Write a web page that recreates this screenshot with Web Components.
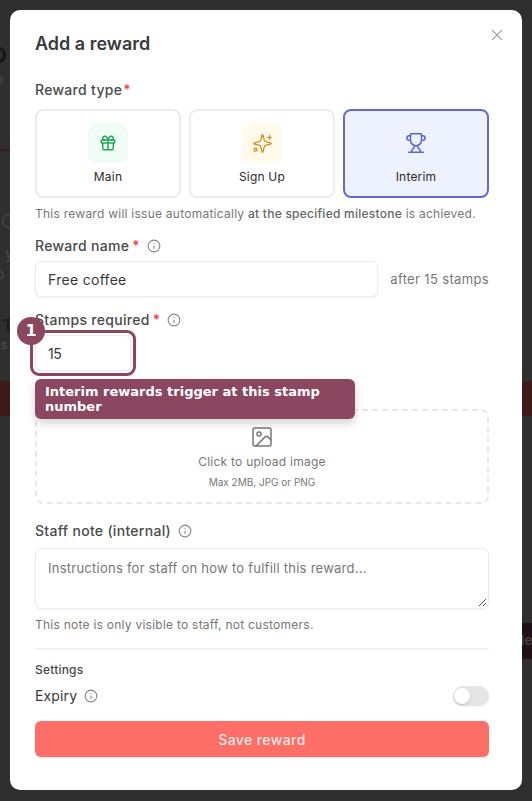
<!DOCTYPE html>
<html><head><meta charset="utf-8"><style>
html,body{margin:0;padding:0;height:801px;overflow:hidden;background:#2f2f2f}
body{font-family:Inter,"Liberation Sans",sans-serif}
</style></head><body>
<app-backdrop>
<reward-modal>
</reward-modal>
</app-backdrop>
<script>
const def=(n,css,html)=>customElements.define(n,class extends HTMLElement{constructor(){super();this.attachShadow({mode:'open'}).innerHTML=`<style>${css}</style>${html}`;}});
const INFO=`<svg width="14" height="14" viewBox="0 0 24 24" fill="none" stroke="#888" stroke-width="1.9" stroke-linecap="round"><circle cx="12" cy="12" r="10"/><path d="M12 16v-4M12 8h.01"/></svg>`;
def('info-icon',`:host{display:inline-flex;margin-left:7px}`,INFO);
def('app-backdrop',`:host{display:block;position:relative;width:532px;height:801px;box-sizing:border-box;padding:10px;background:#2f2f2f;overflow:hidden}
.band{position:absolute;background:#3e1a18}
.arc{position:absolute;border-radius:50%;box-sizing:border-box;border-style:solid}
.g{position:absolute;font-family:Inter,sans-serif;white-space:nowrap;line-height:1}`,`
<div class="band" style="left:0;top:381px;width:10px;height:35px"></div>
<div class="band" style="left:522px;top:381px;width:10px;height:35px"></div>
<div class="band" style="left:522px;top:623px;width:10px;height:36px;background:#1f1117"></div>
<div class="band" style="left:0;top:149px;width:10px;height:2px;background:#3a1a22"></div>
<div class="arc" style="left:-8px;top:47px;width:14px;height:16px;border-width:3px;border-color:#161616"></div>
<div class="arc" style="left:-5px;top:76px;width:8px;height:8px;border-width:1px;border-color:#555"></div>
<div class="arc" style="left:2px;top:214px;width:14px;height:14px;border-width:1px;border-color:#555"></div>
<div class="arc" style="left:-4px;top:271px;width:8px;height:8px;border-width:1px;border-color:#555"></div>
<span class="g" style="left:2px;top:317px;font-size:18px;font-weight:700;color:#1d1d1d">T</span>
<span class="g" style="left:1px;top:339px;font-size:12px;color:#555">s</span>
<span class="g" style="left:5px;top:245px;font-size:16px;color:#4a4a4a">y</span>
<span class="g" style="left:521px;top:634px;font-size:13px;font-weight:600;color:#444">le</span>
<slot></slot>`);
def('type-card',`:host{display:flex;flex-direction:column;align-items:center;box-sizing:border-box;height:89px;flex:1 1 0;border:2px solid #ececec;border-radius:8px;background:#fff;padding-top:12px;font-size:12px;color:#2b2b2b}
:host([active]){border-color:#6069d6;background:#eef1fe}
.i{width:40px;height:40px;border-radius:10px;display:flex;align-items:center;justify-content:center;background:var(--tint,transparent)}
.l{margin-top:6px;line-height:16px;letter-spacing:.2px}`,`<div class="i"><slot name="icon"></slot></div><div class="l"><slot></slot></div>`);
def('field-label',`:host{display:flex;align-items:center;font-size:14px;font-weight:500;color:#4a4a4a;line-height:18px;letter-spacing:.3px}`,`<slot></slot><slot name="req"></slot><slot name="info"></slot>`);
def('text-box',`:host{display:flex;align-items:center;box-sizing:border-box;height:36px;border:1px solid #ececec;border-radius:6px;background:#fff;padding:0 12px;font-size:14px;color:#3a3a3a;box-shadow:0 1px 2px rgba(0,0,0,.05);letter-spacing:.3px}`,`<slot></slot>`);
def('toggle-switch',`:host{display:block;position:relative;width:36px;height:20px;border-radius:10px;background:#e5e5e5;box-shadow:0 1px 3px rgba(0,0,0,.05)}
.k{position:absolute;left:1px;top:2px;width:16px;height:16px;border-radius:50%;background:#fff;box-shadow:0 1px 2px rgba(0,0,0,.2)}`,`<div class="k"></div>`);
def('coach-mark',`:host{display:block;position:absolute;inset:0;pointer-events:none}
.ring{position:absolute;left:20px;top:320px;width:106px;height:46px;box-sizing:border-box;border:3px solid #8b4660;border-radius:9px}
.n{position:absolute;left:7px;top:307px;width:28px;height:28px;border-radius:50%;background:#8b4660;color:#fff;font:700 16px/28px "DejaVu Sans",sans-serif;text-align:center}
.t{position:absolute;left:25px;top:369px;width:320px;height:40px;box-sizing:border-box;background:#8b4660;border-radius:6px;color:#fff;font:700 13px/15px "DejaVu Sans",sans-serif;padding:5px 10px;box-shadow:0 4px 10px rgba(0,0,0,.18)}`,`<div class="ring"></div><div class="n">1</div><div class="t">Interim rewards trigger at this stamp number</div>`);
def('reward-modal',`:host{display:block;position:relative;width:512px;height:780px;box-sizing:border-box;background:#fff;border-radius:10px;padding:22px 33px 0 25px;color:#333}
*{box-sizing:border-box}
h2{margin:0;font-size:18px;font-weight:600;line-height:24px;color:#3a3a3a}
.x{position:absolute;right:18px;top:17.5px;display:flex}
.cards{display:flex;gap:8px;margin-top:10px}
.hint{font-size:12px;line-height:16px;color:#777;letter-spacing:.25px;white-space:nowrap}
.hint b{font-weight:500;color:#666}
.row{display:flex;align-items:center;gap:12px}
.after{font-size:13px;color:#777;white-space:nowrap;letter-spacing:.35px}
.up{display:flex;flex-direction:column;align-items:center;height:95px;border:2px dashed #e8e8e8;border-radius:8px;padding-top:14px;color:#777}
.up .a{font-size:12px;line-height:16px;margin-top:5px;letter-spacing:.25px}
.up .b{font-size:10px;line-height:14px;margin-top:5px}
.ta{height:61px;border:1px solid #ececec;border-radius:6px;padding:10px 12px;font-size:13px;line-height:18px;letter-spacing:.25px;color:#777;position:relative;box-shadow:0 1px 2px rgba(0,0,0,.05)}
.ta svg{position:absolute;right:1px;bottom:1px}
hr{border:0;height:2px;background:#f1f1f1;margin:15px 0 0}
.set{font-size:12px;font-weight:500;color:#4a4a4a;line-height:16px;margin-top:12px;letter-spacing:.2px}
.exp{display:flex;align-items:center;justify-content:space-between;margin-top:8px}
.exp span{display:flex;align-items:center;font-size:14px;color:#3a3a3a;line-height:18px;letter-spacing:.15px}
.save{display:flex;align-items:center;justify-content:center;height:36px;border-radius:6px;background:#fd6f66;color:rgba(255,255,255,.88);margin-top:15px;font-size:14px;font-weight:500;letter-spacing:.4px;box-shadow:0 1px 2px rgba(0,0,0,.1)}
`,`
<div class="x"><svg width="14" height="14" viewBox="0 0 14 14" fill="none" stroke="#999" stroke-width="1.1"><path d="M2.2 2.2l9.6 9.6M11.8 2.2l-9.6 9.6"/></svg></div>
<h2>Add a reward</h2>
<field-label style="margin-top:25px">Reward type<span slot="req" style="color:#ef4444;margin-left:1px">*</span></field-label>
<div class="cards">
<type-card style="--tint:#effdf4"><svg slot="icon" width="18" height="18" viewBox="0 0 24 24" fill="none" stroke="#22a55a" stroke-width="1.9" stroke-linecap="round" stroke-linejoin="round"><rect x="3" y="8" width="18" height="4" rx="1"/><path d="M12 8v13M19 12v7a2 2 0 0 1-2 2H7a2 2 0 0 1-2-2v-7M7.5 8a2.5 2.5 0 0 1 0-5A4.8 8 0 0 1 12 8a4.8 8 0 0 1 4.5-5 2.5 2.5 0 0 1 0 5"/></svg>Main</type-card>
<type-card style="--tint:#fffae9"><svg slot="icon" width="21" height="21" viewBox="0 0 24 24" fill="none" stroke="#db8a1e" stroke-width="1.5" stroke-linecap="round" stroke-linejoin="round"><path d="M9.94 15.5A2 2 0 0 0 8.5 14.06l-6.14-1.58a.5.5 0 0 1 0-.96L8.5 9.94A2 2 0 0 0 9.94 8.5l1.58-6.14a.5.5 0 0 1 .96 0L14.06 8.5a2 2 0 0 0 1.44 1.44l6.14 1.58a.5.5 0 0 1 0 .96L15.5 14.06a2 2 0 0 0-1.44 1.44l-1.58 6.14a.5.5 0 0 1-.96 0z"/><path d="M20 3v4M22 5h-4"/><circle cx="4" cy="19" r="1.6"/></svg>Sign Up</type-card>
<type-card active><svg slot="icon" width="22" height="22" viewBox="0 0 24 24" fill="none" stroke="#5b63d3" stroke-width="1.6" stroke-linecap="round" stroke-linejoin="round"><path d="M6 9H4.5a2.5 2.5 0 0 1 0-5H6M18 9h1.5a2.5 2.5 0 0 0 0-5H18M4 22h16M10 14.66V17c0 .55-.47.98-.97 1.21C7.85 18.75 7 20.24 7 22M14 14.66V17c0 .55.47.98.97 1.21C16.15 18.75 17 20.24 17 22"/><path d="M18 2H6v7a6 6 0 0 0 12 0V2z"/></svg>Interim</type-card>
</div>
<div class="hint" style="margin-top:8px">This reward will issue automatically <b>at the specified milestone</b> is achieved.</div>
<field-label style="margin-top:15px">Reward name<span slot="req" style="color:#ef4444;margin-left:3px">*</span><info-icon slot="info"></info-icon></field-label>
<div class="row" style="margin-top:6px"><text-box style="flex:1">Free coffee</text-box><span class="after">after 15 stamps</span></div>
<field-label style="margin-top:14px">Stamps required<span slot="req" style="color:#ef4444;margin-left:3px">*</span><info-icon slot="info"></info-icon></field-label>
<text-box style="margin-top:6px;width:96px;letter-spacing:-.4px;">15</text-box>
<div style="height:38px"></div>
<div class="up"><svg width="24" height="24" viewBox="0 0 24 24" fill="none" stroke="#777" stroke-width="1.5" stroke-linecap="round" stroke-linejoin="round"><rect x="3" y="3" width="18" height="18" rx="2"/><circle cx="9" cy="9" r="2"/><path d="M21 15l-3.1-3.1a2 2 0 0 0-2.8 0L6 21"/></svg><div class="a">Click to upload image</div><div class="b">Max 2MB, JPG or PNG</div></div>
<field-label style="margin-top:18px">Staff note (internal)<info-icon slot="info"></info-icon></field-label>
<div class="ta" style="margin-top:8px">Instructions for staff on how to fulfill this reward...<svg width="9" height="9" viewBox="0 0 9 9" stroke="#555" stroke-width="1"><path d="M1 8l7-7M5 8l3-3"/></svg></div>
<div class="hint" style="margin-top:8px">This note is only visible to staff, not customers.</div>
<hr>
<div class="set">Settings</div>
<div class="exp"><span>Expiry<info-icon></info-icon></span><toggle-switch></toggle-switch></div>
<div class="save">Save reward</div>
<coach-mark></coach-mark>
`);
</script></body></html>
